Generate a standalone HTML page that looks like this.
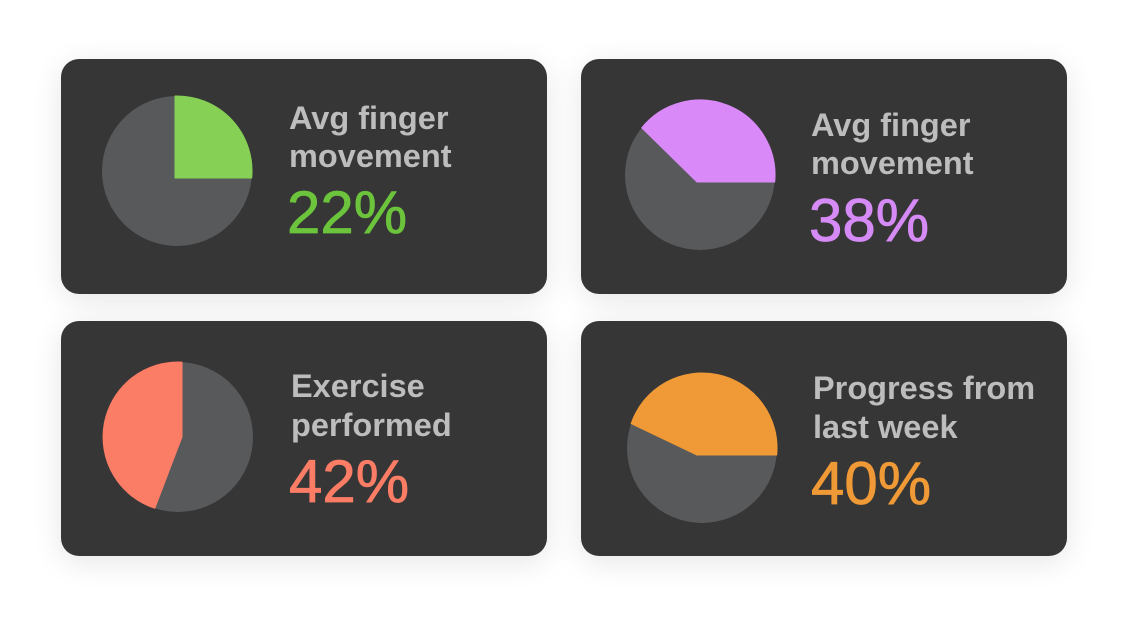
<!DOCTYPE html>
<html><head><meta charset="utf-8"><style>
html,body{margin:0;padding:0;background:#fff;width:1126px;height:631px;overflow:hidden}
.c{position:absolute;width:486px;height:235px;background:#363636;border-radius:18px;box-shadow:0 6px 30px rgba(0,0,0,0.10)}
svg{position:absolute;left:0;top:0}
text{font-family:"Liberation Sans",sans-serif}
.t{font-size:32.5px;font-weight:bold;fill:#bdbdbd}
.p{font-size:60px;stroke-width:0.8px}
</style></head><body>
<div class="c" style="left:61px;top:59px"></div>
<div class="c" style="left:581px;top:59px"></div>
<div class="c" style="left:61px;top:321px"></div>
<div class="c" style="left:581px;top:321px"></div>
<svg width="1126" height="631" viewBox="0 0 1126 631">
<circle cx="177" cy="171" r="75" fill="#58595b"/>
<path d="M175 178 L175 96 A75 75 0 0 1 251.7 178 Z" fill="#86d155" stroke="#86d155" stroke-width="1" stroke-linejoin="round"/>
<text class="t" x="289" y="129">Avg finger</text>
<text class="t" x="289" y="167">movement</text>
<text class="p" x="287" y="233" fill="#6cc43c" stroke="#6cc43c">22%</text>

<circle cx="700" cy="175" r="75" fill="#58595b"/>
<path d="M697 182 L641.7 127.8 A75 75 0 0 1 774.7 182 Z" fill="#d98af8" stroke="#d98af8" stroke-width="1" stroke-linejoin="round"/>
<text class="t" x="811" y="136">Avg finger</text>
<text class="t" x="811" y="174">movement</text>
<text class="p" x="809" y="241" fill="#d58af5" stroke="#d58af5">38%</text>

<circle cx="178" cy="437" r="75" fill="#58595b"/>
<path d="M182 437 L154.8 508.3 A75 75 0 0 1 182 362.1 Z" fill="#fc7d66" stroke="#fc7d66" stroke-width="1" stroke-linejoin="round"/>
<text class="t" x="291" y="397">Exercise</text>
<text class="t" x="291" y="436">performed</text>
<text class="p" x="289" y="502" fill="#fc7d66" stroke="#fc7d66">42%</text>

<circle cx="702" cy="448" r="75" fill="#58595b"/>
<path d="M697 455 L631.1 423.6 A75 75 0 0 1 776.7 455 Z" fill="#f09a37" stroke="#f09a37" stroke-width="1" stroke-linejoin="round"/>
<text class="t" x="813" y="399">Progress from</text>
<text class="t" x="813" y="438">last week</text>
<text class="p" x="811" y="504" fill="#f09a37" stroke="#f09a37">40%</text>
</svg>
</body></html>
